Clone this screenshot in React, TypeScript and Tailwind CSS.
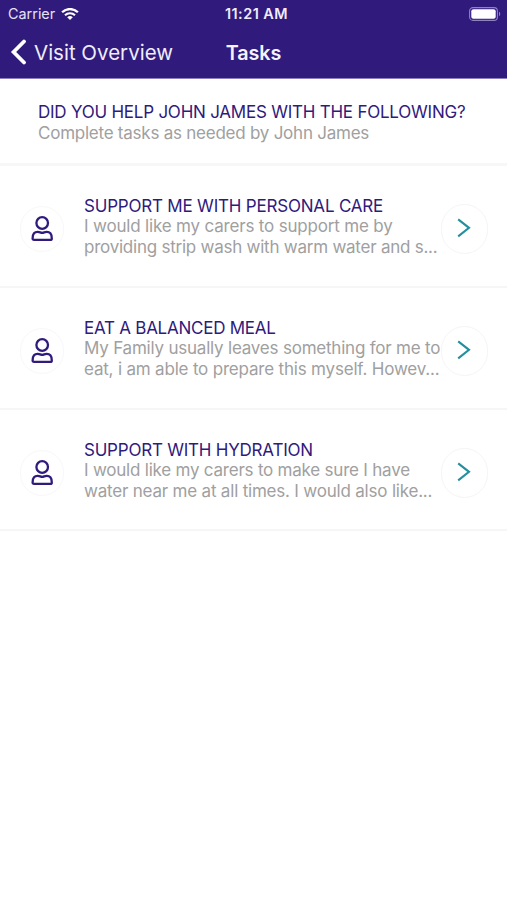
const tasks = [
  {
    title: 'SUPPORT ME WITH PERSONAL CARE',
    lines: [
      { text: 'I would like my carers to support me by', tracking: 'tracking-[-0.18px]' },
      { text: 'providing strip wash with warm water and s...', tracking: 'tracking-[-0.24px]' },
    ],
    titleTracking: 'tracking-[-0.2px]',
    height: 'h-[122px]',
  },
  {
    title: 'EAT A BALANCED MEAL',
    lines: [
      { text: 'My Family usually leaves something for me to', tracking: 'tracking-[-0.21px]' },
      { text: 'eat, i am able to prepare this myself. Howev...', tracking: 'tracking-[-0.19px]' },
    ],
    titleTracking: 'tracking-[-0.25px]',
    height: 'h-[122px]',
  },
  {
    title: 'SUPPORT WITH HYDRATION',
    lines: [
      { text: 'I would like my carers to make sure I have', tracking: 'tracking-[-0.22px]' },
      { text: 'water near me at all times. I would also like...', tracking: 'tracking-[-0.2px]' },
    ],
    titleTracking: 'tracking-[-0.22px]',
    height: 'h-[121px]',
  },
];

function WifiIcon() {
  return (
    <svg className="ml-[6px] h-3 w-[18px]" viewBox="0 0 18 12" fill="none" stroke="white">
      <path d="M1.1 4.3a11.2 11.2 0 0 1 15.8 0" strokeWidth="2.3" />
      <path d="M4 7.3a7.1 7.1 0 0 1 10 0" strokeWidth="2.1" />
      <path d="M9 12 6.2 9.3a4 4 0 0 1 5.6 0Z" fill="white" stroke="none" />
    </svg>
  );
}

function BatteryIcon() {
  return (
    <svg className="h-[14px] w-8" viewBox="0 0 32 14" fill="none">
      <rect x="0.6" y="0.6" width="27.8" height="12.8" rx="3.4" stroke="#8f82c2" strokeWidth="1.1" />
      <rect x="2.3" y="2.3" width="24.4" height="9.4" rx="2" fill="white" />
      <path d="M30 4.8c1.6.6 1.6 3.8 0 4.4Z" fill="#8f82c2" />
    </svg>
  );
}

function PersonIcon() {
  return (
    <svg className="h-[26px] w-[22px]" viewBox="0 0 22 26" fill="none" stroke="#301a7c" strokeWidth="2.3" strokeLinejoin="round">
      <circle cx="11.2" cy="7" r="5.8" />
      <path d="M1.6 22.4C1.6 17.8 3.6 15.7 6.8 15.8c2 .1 2.8 1 4.4 1s2.4-.9 4.4-1c3.2-.1 5.2 2 5.2 6.6q0 1.5-1.5 1.5H3.1q-1.5 0-1.5-1.5Z" />
    </svg>
  );
}

export default function App() {
  return (
    <div className="h-[900px] w-[507px] overflow-hidden bg-white font-['Inter',sans-serif] text-[17px] leading-[21px]">
      <header className="h-[79px] border-b border-[#8a7dc0] bg-[#301a7c] text-white">
        <div className="grid h-7 grid-cols-3 items-center text-[14.4px] leading-7">
          <div className="flex items-center pl-2">
            <span className="text-[#e6e2f4]">Carrier</span>
            <WifiIcon />
          </div>
          <div className="pl-[6px] text-center text-[14.4px] font-semibold tracking-[0.5px] text-[#f0edfa]">11:21 AM</div>
          <div className="flex justify-end pr-[6px]">
            <BatteryIcon />
          </div>
        </div>
        <div className="grid h-12 grid-cols-3 items-center">
          <div className="flex items-center pl-[10px]">
            <svg className="h-[26px] w-4 shrink-0" viewBox="0 0 16 26" fill="none" stroke="white" strokeWidth="3.8" strokeLinecap="round" strokeLinejoin="miter">
              <path d="M14 2.5 3.6 13 14 23.5" />
            </svg>
            <span className="ml-2 whitespace-nowrap text-[20.5px] text-[#f0edfa]">Visit Overview</span>
          </div>
          <h1 className="pt-[2px] text-center text-[19.8px] font-semibold tracking-[-0.1px] text-[#f5f2fc]">Tasks</h1>
        </div>
      </header>
      <section className="h-[87px] border-b-[3px] border-[#f7f7f7] pl-[38px] pt-[23px] whitespace-nowrap">
        <h2 className="text-[#301a7c]"><span className="tracking-[-0.23px]">DID YOU HELP JOHN JAMES WITH THE FOLLOWING?</span></h2>
        <p className="text-[#a0a0a0]"><span className="tracking-[-0.24px]">Complete tasks as needed by John James</span></p>
      </section>
      <main>
        {tasks.map((task) => (
          <article key={task.title} className={`flex border-b-2 border-[#f6f6f6] pl-5 ${task.height}`}>
            <div className="mt-[40px] flex h-[46px] w-11 shrink-0 items-center justify-center rounded-full border border-[#f8f8f8]">
              <PersonIcon />
            </div>
            <div className="ml-5 mt-[30px] w-[357px] shrink-0 whitespace-nowrap">
              <h3 className="h-5 text-[#301a7c]"><span className={task.titleTracking}>{task.title}</span></h3>
              {task.lines.map((line) => (
                <p key={line.text} className="text-[#a0a0a0]"><span className={line.tracking}>{line.text}</span></p>
              ))}
            </div>
            <button aria-label={`Open ${task.title}`} className="mt-[38px] flex h-[50px] w-[47px] shrink-0 items-center justify-center rounded-full border border-[#f5f5f5] pb-[2px] pr-px">
              <svg className="h-5 w-[14px]" viewBox="0 0 14 20" fill="none" stroke="#258f9e" strokeWidth="2.1">
                <path d="M1.2 1.4 12 9.8 1.2 18.4" />
              </svg>
            </button>
          </article>
        ))}
      </main>
    </div>
  );
}
